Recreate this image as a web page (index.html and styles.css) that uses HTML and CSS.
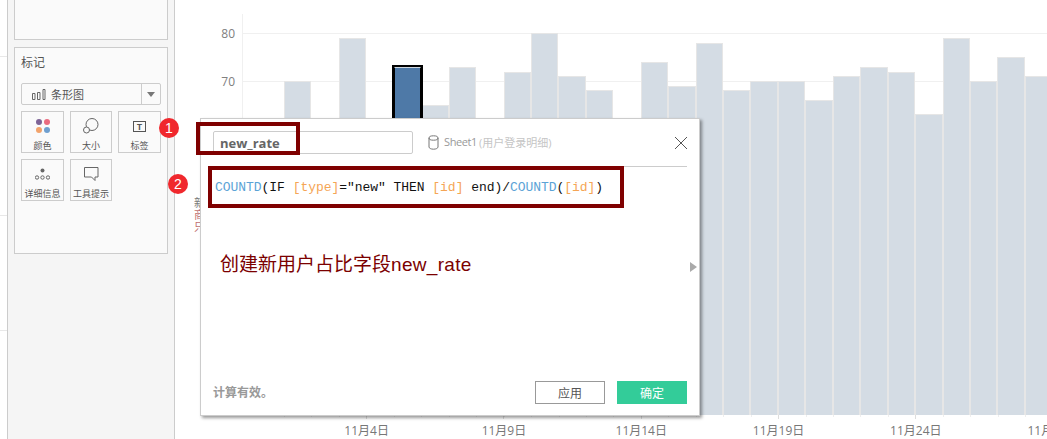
FILE: index.html
```html
<!DOCTYPE html>
<html lang="zh">
<head>
<meta charset="utf-8">
<title>new_rate</title>
<link rel="stylesheet" href="styles.css">
</head>
<body>
<div class="page">
  <div class="strip"></div>
  <aside class="side">
    <div class="card card-top"></div>
    <section class="card marks">
      <h2 class="marks-title">标记</h2>
      <div class="select">
        <svg class="select-icon" width="14" height="11" viewBox="0 0 14 11"><path d="M.5 4.500h2.500v6h-2.500zM5.500 3.500h2.500v7h-2.500zM11 .5h2v10h-2z" fill="none" stroke="#666"/></svg>
        <span class="select-text">条形图</span>
        <span class="select-arrow"></span>
      </div>
      <div class="tiles">
        <div class="tile">
          <svg width="14" height="14" viewBox="0 0 14 14"><circle cx="3" cy="3" r="3" fill="#7d6396"/><circle cx="11" cy="3" r="3" fill="#ea6b7f"/><circle cx="3" cy="11" r="3" fill="#f2a36b"/><circle cx="11" cy="11" r="3" fill="#6f9fcf"/></svg>
          <span>颜色</span>
        </div>
        <div class="tile">
          <svg width="16" height="16" viewBox="0 0 16 16"><circle cx="9" cy="6.500" r="6" fill="none" stroke="#666"/><circle cx="3.500" cy="12" r="3" fill="#fafafa" stroke="#666"/></svg>
          <span>大小</span>
        </div>
        <div class="tile">
          <svg width="13" height="11" viewBox="0 0 13 11"><rect x=".5" y=".5" width="12" height="10" fill="none" stroke="#555"/><text x="6.500" y="8.500" class="t-glyph" text-anchor="middle">T</text></svg>
          <span>标签</span>
        </div>
        <div class="tile">
          <svg width="15" height="12" viewBox="0 0 15 12"><circle cx="7.500" cy="2.500" r="2" fill="#666"/><circle cx="2" cy="9.500" r="1.700" fill="none" stroke="#666"/><circle cx="7.500" cy="9.500" r="1.700" fill="none" stroke="#666"/><circle cx="13" cy="9.500" r="1.700" fill="none" stroke="#666"/></svg>
          <span>详细信息</span>
        </div>
        <div class="tile">
          <svg width="15" height="14" viewBox="0 0 15 14"><path d="M.5.500h13.500v9.500h-3v3.500l-3.500-3.500h-7z" fill="none" stroke="#666"/></svg>
          <span>工具提示</span>
        </div>
      </div>
    </section>
  </aside>

  <main class="chart">
    <div class="plot">
      <div class="axis-y"><span class="y-label">80</span><span class="y-label">70</span></div>
      <div class="grid"><i class="grid-line"></i><i class="grid-line"></i></div>
      <div class="bars">
        <i class="bar" style="height:334px"></i><i class="gap"></i>
        <i class="bar" style="height:377px"></i><i class="gap"></i>
        <i class="bar bar-on" style="height:348px"></i>
        <i class="bar" style="height:310px"></i>
        <i class="bar" style="height:348px"></i><i class="gap"></i>
        <i class="bar" style="height:343px"></i>
        <i class="bar" style="height:382px"></i>
        <i class="bar" style="height:339px"></i>
        <i class="bar" style="height:325px"></i><i class="gap"></i>
        <i class="bar" style="height:353px"></i>
        <i class="bar" style="height:329px"></i>
        <i class="bar" style="height:372px"></i>
        <i class="bar" style="height:325px"></i>
        <i class="bar" style="height:334px"></i>
        <i class="bar" style="height:334px"></i>
        <i class="bar" style="height:315px"></i>
        <i class="bar" style="height:339px"></i>
        <i class="bar" style="height:348px"></i>
        <i class="bar" style="height:343px"></i>
        <i class="bar" style="height:301px"></i>
        <i class="bar" style="height:377px"></i>
        <i class="bar" style="height:334px"></i>
        <i class="bar" style="height:358px"></i>
        <i class="bar" style="height:339px"></i>
      </div>
    </div>
    <div class="ticks">
      <span class="tick">11月4日</span>
      <span class="tick">11月9日</span>
      <span class="tick">11月14日</span>
      <span class="tick">11月19日</span>
      <span class="tick">11月24日</span>
      <span class="tick">11月29日</span>
    </div>
  </main>
</div>

<div class="behind-text">新商只</div>

<div class="dialog">
  <div class="dialog-head">
    <div class="name-input">new_rate</div>
    <div class="source">
      <svg width="11" height="15" viewBox="0 0 11 15"><ellipse cx="5.500" cy="3" rx="4.500" ry="2.200" fill="none" stroke="#777"/><path d="M1 3v9c0 1.200 2 2.200 4.500 2.200s4.500-1 4.500-2.200v-9" fill="none" stroke="#777"/></svg>
      <span class="source-name">Sheet1</span> <span class="source-sub">(用户登录明细)</span>
    </div>
    <svg class="close" width="12" height="12" viewBox="0 0 12 12"><path d="M0 0l12 12M12 0l-12 12" stroke="#555" fill="none"/></svg>
  </div>
  <div class="editor">
    <p class="code"><span class="fn">COUNTD</span>(IF <span class="fld">[type]</span>="new" THEN <span class="fld">[id]</span> end)/<span class="fn">COUNTD</span>(<span class="fld">[id]</span>)</p>
    <p class="note">创建新用户占比字段<span class="note-latin">new_rate</span></p>
    <span class="expander"></span>
  </div>
  <div class="dialog-foot">
    <span class="status">计算有效。</span>
    <button class="btn btn-apply">应用</button>
    <button class="btn btn-ok">确定</button>
  </div>
</div>

<span class="badge badge-1">1</span>
<span class="badge badge-2">2</span>
<div class="mark-box mark-box-1"></div>
<div class="mark-box mark-box-2"></div>
</body>
</html>
```
FILE: styles.css
```css
* { box-sizing: border-box; }
html, body { margin: 0; height: 100%; overflow: hidden; background: #fff; }
body { font-family: "Open Sans", "Noto Sans CJK SC", sans-serif; color: #555; position: relative; }

.page { display: flex; height: 439px; width: 1047px; overflow: hidden; }

.strip { width: 7px; flex: none; background: linear-gradient(#e8e8e8, #e8e8e8) 0 56px / 7px 1px no-repeat, linear-gradient(#e8e8e8, #e8e8e8) 0 215px / 7px 1px no-repeat, linear-gradient(#e8e8e8, #e8e8e8) 0 330px / 7px 1px no-repeat; }

.side { width: 168px; flex: none; background: #f5f5f5; border-left: 1px solid #ccc; border-right: 1px solid #ccc; padding: 0 6px; display: flex; flex-direction: column; gap: 7px; }
.card { background: #fafafa; border: 1px solid #ccc; width: 154px; }
.card-top { height: 40px; flex: none; border-top: 0; }
.marks { height: 207px; flex: none; padding: 7px 6px; }
.marks-title { margin: 0; font-size: 12px; font-weight: 400; line-height: 16px; color: #555; }

.select { margin-top: 12px; height: 22px; width: 140px; border: 1px solid #ccc; border-radius: 2px; display: flex; align-items: center; padding-left: 10px; font-size: 11px; background: #fafafa; }
.select-icon { flex: none; }
.select-text { margin-left: 5px; }
.select-arrow { margin-left: auto; width: 19px; height: 100%; border-left: 1px solid #ccc; position: relative; }
.select-arrow::after { content: ""; position: absolute; left: 5px; top: 8px; border: 4px solid transparent; border-top: 5px solid #777; border-bottom: 0; }

.tiles { display: grid; grid-template-columns: 43px 42px 43px; grid-auto-rows: 42px; column-gap: 6px; row-gap: 6px; margin-top: 6px; }
.tile { border: 1px solid #ccc; background: #fafafa; display: grid; grid-template-rows: 28px 12px; justify-items: center; align-items: center; font-size: 9px; line-height: 12px; color: #555; white-space: nowrap; }
.t-glyph { font: 700 9px "Liberation Mono", monospace; fill: #555; }

.chart { flex: 1 0 auto; width: 872px; }
.plot { position: relative; height: 415px; }
.axis-y { position: absolute; left: 34px; top: 14px; width: 34px; height: 401px; border-right: 1px solid #f0f0f0; }
.y-label { position: absolute; right: 7px; font-size: 12px; line-height: 16px; color: #808080; }
.y-label:nth-child(1) { top: 12px; }
.y-label:nth-child(2) { top: 60px; }
.grid { position: absolute; left: 68px; right: 0; top: 33px; display: flex; flex-direction: column; gap: 47px; }
.grid-line { display: block; height: 1px; background: #f0f0f0; }
.bars { position: absolute; left: 109px; bottom: 0; width: 790px; display: flex; align-items: flex-end; }
.bar, .gap { display: block; flex: none; width: 27.45px; }
.bar { background: #d4dce4; border: 1px solid #e6e6e6; border-bottom: 0; }
.bar-on { background: #4e79a7; box-shadow: 0 0 0 2px #000; clip-path: inset(-2px -2px 0 -2px); border-color: #cfd8e0 #000 #000; position: relative; }

.ticks { display: flex; padding-left: 123px; width: 1000px; height: 24px; background: repeating-linear-gradient(90deg, #ddd 0 1px, transparent 1px 137.3px) 191px 0 / 100% 4px no-repeat, repeating-linear-gradient(90deg, #eee 0 1px, transparent 1px 27.45px) 109px 0 / 100% 2px no-repeat; }
.tick { width: 137.3px; flex: none; text-align: center; font-size: 12px; line-height: 16px; color: #777; margin-top: 8px; white-space: nowrap; }

.behind-text { position: absolute; left: 194px; top: 197px; width: 7px; height: 36px; overflow: hidden; font-size: 11px; line-height: 12px; color: #c07070; word-break: break-all; }
.behind-text::first-letter { color: #777; }

.dialog { position: absolute; left: 200px; top: 118px; width: 500px; height: 298px; background: #fff; border: 1px solid #ccc; box-shadow: 2px 2px 3px rgba(0,0,0,.4); display: flex; flex-direction: column; padding: 0 12px; }
.dialog-head { height: 48px; flex: none; display: flex; align-items: center; border-bottom: 1px solid #ccc; }
.name-input { width: 200px; height: 23px; border: 1px solid #ccc; border-radius: 2px; font: 700 13px/22px "Open Sans", sans-serif; color: #666; padding-left: 6px; }
.source { margin-left: 15px; padding-bottom: 2px; display: flex; align-items: center; gap: 5px; font-size: 11px; color: #999; white-space: pre; }
.source svg { margin-top: 2px; }
.source-name { letter-spacing: -.4px; }
.source-sub { color: #c5c5c5; margin-left: -3px; }
.close { margin-left: auto; }
.editor { flex: 1; position: relative; }
.code { margin: 12px 0 0 2px; font: 13px/18px "Liberation Mono", monospace; letter-spacing: -.04px; color: #111; white-space: pre; }
.fn { color: #5ba3d6; }
.fld { color: #f5a555; }
.note { margin: 55px 0 0 7px; font: 19px/26px "Liberation Sans", "Noto Sans CJK SC", sans-serif; color: #7b0000; }
.note-latin { letter-spacing: .3px; }
.expander { position: absolute; right: -10px; top: 95px; border: 5px solid transparent; border-left: 7px solid #aaa; border-right: 0; }
.dialog-foot { flex: none; height: 35px; display: flex; align-items: flex-start; }
.status { font-size: 12px; font-weight: 700; color: #999; line-height: 24px; margin-top: 1px; }
.btn { width: 70px; height: 23px; font: 12px/20px "Noto Sans CJK SC", sans-serif; padding: 0; border-radius: 0; margin-top: 1px; }
.btn-apply { margin-left: auto; border: 1px solid #999; background: #fff; color: #555; }
.btn-ok { margin-left: 12px; border: 0; background: #33cc99; color: #fff; }

.badge { position: absolute; width: 20px; height: 20px; border-radius: 50%; background: #f0282d; color: #fff; font: 14px/20px "Liberation Sans", sans-serif; text-align: center; }
.badge-1 { left: 159px; top: 118px; }
.badge-2 { left: 168px; top: 174px; }

.mark-box { position: absolute; border: 4px solid #7f0000; }
.mark-box-1 { left: 196px; top: 122px; width: 104px; height: 33px; }
.mark-box-2 { left: 208px; top: 166px; width: 416px; height: 42px; }
```
